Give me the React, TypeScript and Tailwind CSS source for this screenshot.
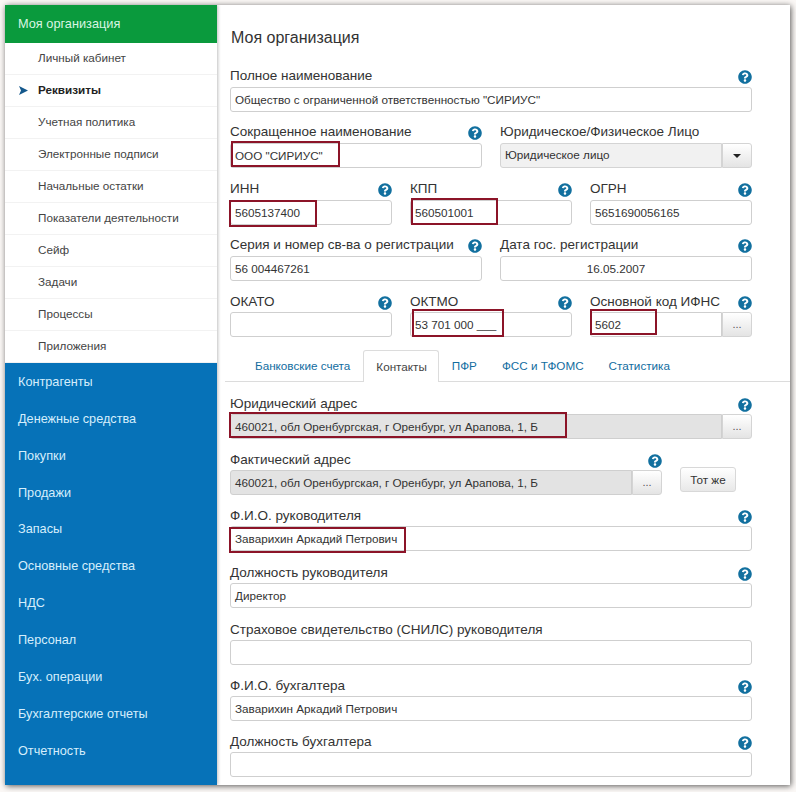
import { FaQuestionCircle } from 'react-icons/fa';

const subItems = [
  'Личный кабинет',
  'Реквизиты',
  'Учетная политика',
  'Электронные подписи',
  'Начальные остатки',
  'Показатели деятельности',
  'Сейф',
  'Задачи',
  'Процессы',
  'Приложения',
];

const mainItems = [
  'Контрагенты',
  'Денежные средства',
  'Покупки',
  'Продажи',
  'Запасы',
  'Основные средства',
  'НДС',
  'Персонал',
  'Бух. операции',
  'Бухгалтерские отчеты',
  'Отчетность',
];

const tabs = ['Банковские счета', 'Контакты', 'ПФР', 'ФСС и ТФОМС', 'Статистика'];

type FieldProps = {
  label: string;
  value?: string;
  help?: boolean;
  mark?: string;
  grey?: boolean;
  more?: boolean;
  low?: boolean;
  inputClass?: string;
  className?: string;
};

function MoreButton() {
  return (
    <div className="w-[30px] shrink-0 h-full flex items-center justify-center border border-[#d4d4d4] rounded-r-[3px] bg-gradient-to-b from-white to-[#e4e4e4] text-[11px] text-[#555]">
      ...
    </div>
  );
}

function Field({ label, value, help = true, mark, grey, more, low, inputClass = '', className = '' }: FieldProps) {
  return (
    <div className={className}>
      <div className="flex justify-between h-[20px] text-[13.5px] text-[#333]">
        <span className={low ? 'leading-[19px]' : 'leading-[17px]'}>{label}</span>
        {help && <FaQuestionCircle size={14} className={`text-[#12709f] shrink-0 ${low ? 'mt-[4px]' : 'mt-[3px]'}`} />}
      </div>
      <div className="relative flex h-[25px]">
        <div
          className={`flex-1 min-w-0 flex items-center px-[4px] border border-[#cfcfcf] text-[11.7px] text-[#333] rounded-l-[3px] ${more ? '' : 'rounded-r-[3px]'} ${grey ? 'bg-[#e3e3e3]' : 'bg-white'} ${inputClass}`}
        >
          {value}
        </div>
        {more && <MoreButton />}
        {mark && <div className={`absolute border-2 border-[#8c1428] ${mark}`} />}
      </div>
    </div>
  );
}

export default function App() {
  return (
    <div className="w-[796px] h-[792px] pt-[5px] pl-[5px] bg-[#fbf8f6] font-['Liberation_Sans',Arial,sans-serif]">
      <div className="w-[785px] h-[780px] flex overflow-hidden bg-white shadow-[1px_1px_6px_rgba(0,0,0,0.65)]">
        <aside className="w-[212px] shrink-0 flex flex-col bg-[#0672b8] shadow-[1px_0_3px_rgba(0,0,0,0.25)] z-10">
          <div className="h-[38px] flex items-center pl-[13px] bg-[#0a9a3d] text-[12.75px] text-[#d9f5e2]">
            Моя организация
          </div>
          <div className="bg-white">
            {subItems.map((item, i) => (
              <div
                key={item}
                className={`relative h-[32px] flex items-center pl-[33px] pb-[2px] border-b border-[#f2f2f2] text-[11.7px] ${i === 1 ? 'font-bold text-[#222]' : 'text-[#444]'}`}
              >
                {i === 1 && (
                  <svg width="9" height="9" viewBox="0 0 9 9" className="absolute left-[14px] top-[11px]">
                    <path d="M0 0 L9 4.5 L0 9 L2 4.5 Z" fill="#14588c" />
                  </svg>
                )}
                {item}
              </div>
            ))}
          </div>
          <div className="pt-[1px]">
            {mainItems.map(item => (
              <div key={item} className="h-[36.9px] flex items-center pl-[13px] text-[12.7px] text-[#d5eefc]">
                {item}
              </div>
            ))}
          </div>
        </aside>

        <main className="flex-1 min-w-0 pl-[13px] pr-[38px] pt-[23px]">
          <h1 className="h-[20px] ml-[1px] text-[16px] leading-[20px] text-[#333]">Моя организация</h1>

          <Field
            className="mt-[19px]"
            label="Полное наименование"
            value={'Общество с ограниченной ответственностью "СИРИУС"'}
          />

          <div className="mt-[11px] grid grid-cols-2 gap-x-[18px]">
            <Field
              label="Сокращенное наименование"
              value={'ООО "СИРИУС"'}
              mark="left-[1px] top-[-2px] w-[109px] h-[26px]"
            />
            <div>
              <div className="h-[20px] text-[13.5px] leading-[17px] text-[#333]">Юридическое/Физическое Лицо</div>
              <div className="flex h-[25px]">
                <div className="flex-1 flex items-center px-[4px] pb-[1px] border border-[#d4d4d4] rounded-l-[3px] bg-[#f1f1f1] text-[11.7px] text-[#333]">
                  Юридическое лицо
                </div>
                <div className="w-[30px] flex items-center justify-center border border-[#d4d4d4] rounded-r-[3px] bg-gradient-to-b from-white to-[#e4e4e4]">
                  <div className="w-0 h-0 border-x-[4px] border-x-transparent border-t-[4px] border-t-[#222]" />
                </div>
              </div>
            </div>
          </div>

          <div className="mt-[12px] grid grid-cols-3 gap-x-[18px]">
            <Field label="ИНН" value="5605137400" mark="left-[-1px] top-[0px] w-[88px] h-[27px]" />
            <Field label="КПП" value="560501001" mark="left-[1px] top-[-2px] w-[87px] h-[27px]" />
            <Field label="ОГРН" value="5651690056165" />
          </div>

          <div className="mt-[11px] grid grid-cols-2 gap-x-[18px]">
            <Field label="Серия и номер св-ва о регистрации" value="56 004467261" />
            <Field label="Дата гос. регистрации" value="16.05.2007" inputClass="justify-center pr-[24px]" />
          </div>

          <div className="mt-[11px] grid grid-cols-3 gap-x-[18px]">
            <Field low label="ОКАТО" />
            <Field low label="ОКТМО" value="53 701 000 ___" mark="left-[2px] top-[-3px] w-[92px] h-[28px]" />
            <Field low label="Основной код ИФНС" value="5602" more mark="left-[0px] top-[-3px] w-[67px] h-[26px]" />
          </div>

          <div className="mt-[13px] ml-[-5px] mr-[-38px] pl-[18px] h-[32px] flex border-b border-[#dcdcdc] text-[11.7px]">
            {tabs.map(tab =>
              tab === 'Контакты' ? (
                <div
                  key={tab}
                  className="h-[32px] flex items-center pl-[12px] pr-[11px] mr-[1px] bg-white border border-b-0 border-[#dcdcdc] rounded-t-[3px] text-[#444]"
                >
                  {tab}
                </div>
              ) : (
                <div key={tab} className="h-[31px] flex items-center px-[12px] mr-[1px] text-[#126d9f]">
                  {tab}
                </div>
              ),
            )}
          </div>

          <Field
            low
            className="mt-[12px]"
            label="Юридический адрес"
            value="460021, обл Оренбургская, г Оренбург, ул Арапова, 1, Б"
            grey
            more
            mark="left-[-1px] top-[-2px] w-[338px] h-[26px]"
          />

          <div className="mt-[11px] flex items-start">
            <Field
              low
              className="w-[432px]"
              label="Фактический адрес"
              value="460021, обл Оренбургская, г Оренбург, ул Арапова, 1, Б"
              grey
              more
            />
            <div className="ml-[18px] mt-[17px] w-[56px] h-[25px] flex items-center justify-center border border-[#d8d8d8] rounded-[3px] bg-gradient-to-b from-white to-[#e8e8e8] text-[11.7px] text-[#333]">
              Тот же
            </div>
          </div>

          <Field
            low
            className="mt-[11px]"
            label="Ф.И.О. руководителя"
            value="Заварихин Аркадий Петрович"
            mark="left-[-1px] top-[1px] w-[177px] h-[26px]"
          />
          <Field low className="mt-[12px]" label="Должность руководителя" value="Директор" />
          <Field low className="mt-[12px]" label="Страховое свидетельство (СНИЛС) руководителя" help={false} />
          <Field low className="mt-[11px]" label="Ф.И.О. бухгалтера" value="Заварихин Аркадий Петрович" />
          <Field low className="mt-[11px]" label="Должность бухгалтера" />
        </main>
      </div>
    </div>
  );
}
